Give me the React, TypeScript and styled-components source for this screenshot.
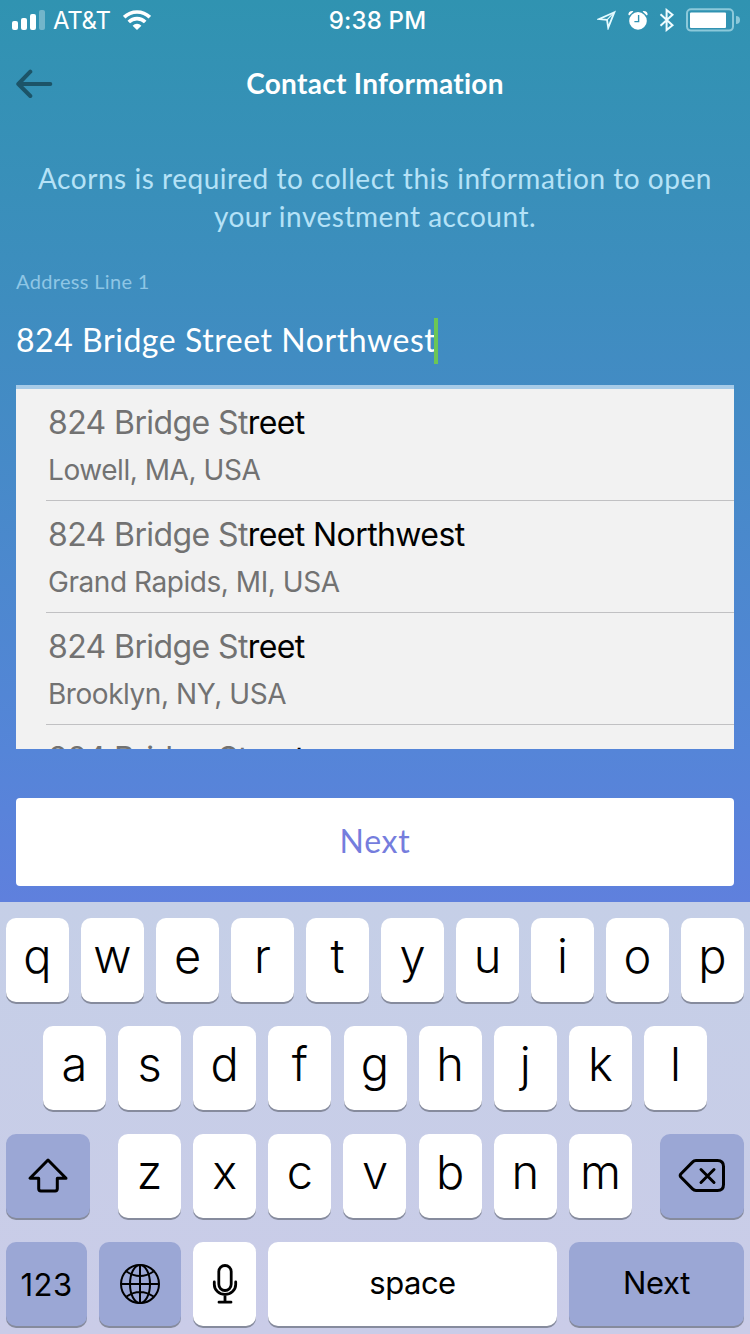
import React from 'react';
import styled, { createGlobalStyle } from 'styled-components';

const GlobalStyle = createGlobalStyle`
  *, *::before, *::after { box-sizing: border-box; }
  body { margin: 0; }
`;

const brandFont = `Lato, "Open Sans", sans-serif`;
const systemFont = `Inter, "Liberation Sans", sans-serif`;

const Screen = styled.div`
  width: 750px;
  height: 1334px;
  display: flex;
  flex-direction: column;
  overflow: hidden;
  font-family: ${systemFont};
`;

const Page = styled.main`
  height: 902px;
  display: flex;
  flex-direction: column;
  background: linear-gradient(180deg, #3093b1 0px, #3e8dbf 300px, #5585d8 750px, #5f80dd 902px);
`;

const StatusBar = styled.header`
  height: 40px;
  display: grid;
  grid-template-columns: 1fr auto 1fr;
  align-items: center;
  padding: 0 12px;
  color: #fff;
`;

const StatusGroup = styled.div<{ $end?: boolean }>`
  display: flex;
  align-items: center;
  gap: ${(p) => (p.$end ? '11px' : '0')};
  justify-content: ${(p) => (p.$end ? 'flex-end' : 'flex-start')};
  margin-right: ${(p) => (p.$end ? '-2px' : '0')};
`;

const Carrier = styled.span`
  margin: 2px 12px 0 8px;
  font-size: 24px;
  line-height: 30px;
  letter-spacing: -0.3px;
`;

const Clock = styled.span`
  margin: 2px 0 0 5px;
  font-size: 24px;
  line-height: 30px;
  font-weight: 500;
  letter-spacing: 0.2px;
`;

const NavBar = styled.nav`
  height: 88px;
  display: grid;
  grid-template-columns: 60px 1fr 60px;
  align-items: center;
  padding: 0 15px;
`;

const BackButton = styled.button`
  display: flex;
  padding: 0;
  border: 0;
  background: none;
`;

const Title = styled.h1`
  margin: 0 0 2px;
  text-align: center;
  font: 700 28px/40px ${brandFont};
  letter-spacing: 0.3px;
  color: #fff;
`;

const Intro = styled.p`
  margin: 31px 0 0;
  text-align: center;
  font: 400 28px/38px ${brandFont};
  letter-spacing: 0.53px;
  color: #b5e2f7;
`;

const Field = styled.div`
  display: flex;
  flex-direction: column;
  margin: 33px 16px 0;
  height: 121px;
  border-bottom: 4px solid #a7cbe8;
`;

const Label = styled.label`
  font: 400 20px/26px ${brandFont};
  letter-spacing: 0.33px;
  color: #8fc6e5;
`;

const Value = styled.div`
  display: flex;
  align-items: flex-start;
  margin-top: 23px;
  height: 47px;
  font: 400 32px/46px ${brandFont};
  letter-spacing: 0.55px;
  color: #fff;
`;

const Caret = styled.span`
  width: 4px;
  height: 46px;
  margin: 1px 0 0 -2px;
  background: #6cc655;
`;

const Suggestions = styled.ul`
  list-style: none;
  margin: 0 16px;
  padding: 0;
  height: 360px;
  overflow: hidden;
  background: #f2f2f2;
`;

const Suggestion = styled.li`
  height: 112px;
  margin-left: 30px;
  padding: 14px 0 0 2px;
  border-bottom: 1px solid #c1c1c3;
  color: #727272;
`;

const Street = styled.div`
  font-size: 32px;
  line-height: 40px;
  letter-spacing: -0.6px;
`;

const Completion = styled.span`
  color: #000;
`;

const City = styled.div`
  margin-top: 9px;
  font-size: 28px;
  line-height: 36px;
  letter-spacing: -0.45px;
`;

const NextButton = styled.button`
  height: 88px;
  margin: 49px 16px 0;
  padding: 0 0 2px;
  border: 0;
  border-radius: 4px;
  background: #fff;
  font: 400 32px/40px ${brandFont};
  letter-spacing: 0.7px;
  color: #757ddd;
`;

const Keyboard = styled.section`
  height: 432px;
  display: flex;
  flex-direction: column;
  gap: 24px;
  padding: 16px 6px 0;
  background: linear-gradient(180deg, #c5cfe7, #cacce8);
`;

const KeyRow = styled.div<{ $inset?: number }>`
  display: flex;
  justify-content: space-between;
  height: 84px;
  padding: 0 ${(p) => p.$inset ?? 0}px;
`;

const LetterGroup = styled.div`
  width: 514px;
  display: flex;
  justify-content: space-between;
`;

const Key = styled.button<{ $width?: number; $dark?: boolean; $label?: boolean; $tracking?: number; $lift?: number }>`
  width: ${(p) => p.$width ?? 63}px;
  height: 84px;
  display: flex;
  align-items: center;
  justify-content: center;
  padding: 0 0 ${(p) => p.$lift ?? (p.$label ? 0 : 9)}px;
  border: 0;
  border-radius: 10px;
  background: ${(p) => (p.$dark ? '#9ba7d5' : '#fff')};
  box-shadow: 0 2px 0 #868b9d;
  font-family: ${systemFont};
  font-size: ${(p) => (p.$label ? 31 : 47)}px;
  font-weight: ${(p) => (p.$label ? 400 : 350)};
  letter-spacing: ${(p) => p.$tracking ?? 0}px;
  color: #000;
`;

const Signal = () => (
  <svg width="33" height="20" viewBox="0 0 33 20" fill="#fff">
    <rect x="0" y="11" width="6" height="9" rx="2" />
    <rect x="9" y="8" width="6" height="12" rx="2" />
    <rect x="18" y="4" width="6" height="16" rx="2" />
    <rect x="27" y="0" width="6" height="20" rx="2" opacity=".32" />
  </svg>
);

const Wifi = () => (
  <svg width="28" height="20" viewBox="0 0 28 20" fill="none" stroke="#fff" strokeWidth="3.6">
    <path d="M1.2 7.2a18.2 18.2 0 0 1 25.6 0" />
    <path d="M5.8 12a11.6 11.6 0 0 1 16.4 0" />
    <path d="M14 20l-4.4-4.3a6.2 6.2 0 0 1 8.8 0z" fill="#fff" stroke="none" />
  </svg>
);

const Location = () => (
  <svg width="20" height="20" viewBox="0 0 20 20" fill="none" stroke="#e4fbff" strokeWidth="1.8">
    <path d="M17.4 2.2L1.8 9.1l8.2.8 1.2 7.8z" />
    <path d="M17.4 2.2L10 9.9" strokeWidth="1.2" />
  </svg>
);

const Alarm = () => (
  <svg width="20" height="20" viewBox="0 0 20 20">
    <circle cx="10" cy="10.9" r="8.8" fill="#fff" />
    <path d="M.4 4.8Q.2.8 4.6.9L5.4 1.4 1.2 5.4zM19.6 4.8Q19.8.8 15.4.9L14.6 1.4 18.8 5.4z" fill="#fff" />
    <path d="M10.6 5v6.6H6.4" fill="none" stroke="#3192b2" strokeWidth="1.4" />
  </svg>
);

const Bluetooth = () => (
  <svg width="16" height="24" viewBox="0 0 16 24" fill="none" stroke="#effcff" strokeWidth="2">
    <path d="M1.5 6.2l12 11L7.6 22V2l5.9 4.8-12 11" />
  </svg>
);

const Battery = () => (
  <svg width="54" height="24" viewBox="0 0 54 24">
    <rect x="1" y="1.2" width="46" height="21.4" rx="4" fill="none" stroke="#8cc9da" strokeWidth="2" />
    <rect x="4" y="4.5" width="36" height="15.5" rx="1" fill="#fff" />
    <path d="M50 8a4 4 0 0 1 0 8z" fill="#8cc9da" />
  </svg>
);

const BackArrow = () => (
  <svg width="39" height="30" viewBox="0 0 39 30" fill="none" stroke="#1c5468" strokeWidth="4" strokeLinecap="round" strokeLinejoin="round">
    <path d="M15.3 2.7L3.3 15l12 12M3.3 15h32" />
  </svg>
);

const Shift = () => (
  <svg width="42" height="38" viewBox="0 0 42 38" fill="none" stroke="#000" strokeWidth="3" strokeLinejoin="round">
    <path d="M21 3L3 21.3h8.7v10.5q0 2.2 2.2 2.2h14.2q2.2 0 2.2-2.2V21.3H39z" />
  </svg>
);

const Backspace = () => (
  <svg width="48" height="36" viewBox="0 0 48 36" fill="none" stroke="#000" strokeWidth="3" strokeLinejoin="round" strokeLinecap="round">
    <path d="M18 2.5h21.5q6 0 6 6v18q0 6-6 6H18q-2 0-3.5-1.6L2.8 19q-1.2-1.5 0-3L14.5 4.1Q16 2.5 18 2.5z" />
    <path d="M23 11.5l13 13M36 11.5l-13 13" />
  </svg>
);

const Globe = () => (
  <svg width="42" height="42" viewBox="0 0 42 42" fill="none" stroke="#000" strokeWidth="2">
    <circle cx="21" cy="21" r="19" />
    <ellipse cx="21" cy="21" rx="10" ry="19" />
    <path d="M21 2v38M2 21h38M7.5 8.5q13.5 9 27 0M7.5 33.5q13.5-9 27 0" />
  </svg>
);

const Mic = () => (
  <svg width="28" height="42" viewBox="0 0 28 42" fill="none" stroke="#000" strokeWidth="2.8" strokeLinecap="round">
    <rect x="7.8" y="2.5" width="12.4" height="25" rx="6.2" />
    <path d="M3.3 19v2.5a10.7 10 0 0 0 21.4 0V19M14 32v6.7M8 39.2h12" />
  </svg>
);

const places = [
  { rest: 'reet', city: 'Lowell, MA, USA' },
  { rest: 'reet Northwest', city: 'Grand Rapids, MI, USA' },
  { rest: 'reet', city: 'Brooklyn, NY, USA' },
  { rest: 'reet', city: '' },
];

const letterKeys = (letters: string) =>
  letters.split('').map((letter) => <Key key={letter}>{letter}</Key>);

export default function App() {
  return (
    <Screen>
      <GlobalStyle />
      <Page>
        <StatusBar>
          <StatusGroup>
            <Signal />
            <Carrier>AT&amp;T</Carrier>
            <Wifi />
          </StatusGroup>
          <Clock>9:38 PM</Clock>
          <StatusGroup $end>
            <Location />
            <Alarm />
            <Bluetooth />
            <Battery />
          </StatusGroup>
        </StatusBar>
        <NavBar>
          <BackButton aria-label="Back"><BackArrow /></BackButton>
          <Title>Contact Information</Title>
        </NavBar>
        <Intro>
          Acorns is required to collect this information to open
          <br />
          your investment account.
        </Intro>
        <Field>
          <Label>Address Line 1</Label>
          <Value>824 Bridge Street Northwest<Caret /></Value>
        </Field>
        <Suggestions>
          {places.map((place, i) => (
            <Suggestion key={i}>
              <Street>824 Bridge St<Completion>{place.rest}</Completion></Street>
              <City>{place.city}</City>
            </Suggestion>
          ))}
        </Suggestions>
        <NextButton>Next</NextButton>
      </Page>
      <Keyboard>
        <KeyRow>{letterKeys('qwertyuiop')}</KeyRow>
        <KeyRow $inset={37}>{letterKeys('asdfghjkl')}</KeyRow>
        <KeyRow>
          <Key $width={84} $dark $label aria-label="Shift"><Shift /></Key>
          <LetterGroup>{letterKeys('zxcvbnm')}</LetterGroup>
          <Key $width={84} $dark $label aria-label="Delete"><Backspace /></Key>
        </KeyRow>
        <KeyRow>
          <Key $width={81} $dark $label $tracking={0.4}>123</Key>
          <Key $width={82} $dark $label aria-label="Globe"><Globe /></Key>
          <Key $label aria-label="Dictate"><Mic /></Key>
          <Key $width={289} $label $tracking={-0.5} $lift={3}>space</Key>
          <Key $width={175} $dark $label $tracking={-0.4} $lift={3}>Next</Key>
        </KeyRow>
      </Keyboard>
    </Screen>
  );
}
